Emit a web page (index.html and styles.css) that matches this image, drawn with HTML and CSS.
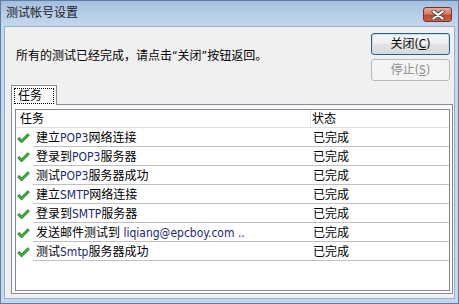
FILE: index.html
```html
<!DOCTYPE html>
<html>
<head>
<meta charset="utf-8">
<link rel="stylesheet" href="styles.css">
</head>
<body>
<div class="window">
  <div class="titlebar">
    <span class="title">测试帐号设置</span>
    <span class="close">
      <svg width="14" height="10" viewBox="0 0 14 10"><path d="M2.5 1.5 L11.5 8.5 M11.5 1.5 L2.5 8.5" stroke="#4a4a4a" stroke-width="4" stroke-linecap="round" fill="none"/><path d="M2.5 1.5 L11.5 8.5 M11.5 1.5 L2.5 8.5" stroke="#ffffff" stroke-width="2.2" stroke-linecap="round" fill="none"/></svg>
    </span>
  </div>
  <div class="client">
    <div class="top">
      <p class="msg">所有的测试已经完成，请点击“关闭”按钮返回。</p>
      <div class="buttons">
        <button class="btn default">关闭(<u>C</u>)</button>
        <button class="btn" disabled>停止(<u>S</u>)</button>
      </div>
    </div>
    <div class="tabs">
      <div class="tabstrip"><div class="tab"><span class="focus">任务</span></div></div>
      <div class="panel">
        <div class="list">
          <div class="header"><span class="h-task">任务</span><span class="h-status">状态</span></div>
          <div class="row"><span class="icon"><svg width="13" height="10" viewBox="0 0 13 10"><path d="M1.2 5 L4.6 8.4 L11.8 1.3" stroke="#17701c" stroke-width="2.8" fill="none"/><path d="M1.2 5 L4.6 8.4 L11.8 1.3" stroke="#3fbf3a" stroke-width="1.4" fill="none"/></svg></span><span class="cells"><span class="task">建立<span class="en">POP3</span>网络连接</span><span class="status">已完成</span></span></div>
          <div class="row"><span class="icon"><svg width="13" height="10" viewBox="0 0 13 10"><path d="M1.2 5 L4.6 8.4 L11.8 1.3" stroke="#17701c" stroke-width="2.8" fill="none"/><path d="M1.2 5 L4.6 8.4 L11.8 1.3" stroke="#3fbf3a" stroke-width="1.4" fill="none"/></svg></span><span class="cells"><span class="task">登录到<span class="en">POP3</span>服务器</span><span class="status">已完成</span></span></div>
          <div class="row"><span class="icon"><svg width="13" height="10" viewBox="0 0 13 10"><path d="M1.2 5 L4.6 8.4 L11.8 1.3" stroke="#17701c" stroke-width="2.8" fill="none"/><path d="M1.2 5 L4.6 8.4 L11.8 1.3" stroke="#3fbf3a" stroke-width="1.4" fill="none"/></svg></span><span class="cells"><span class="task">测试<span class="en">POP3</span>服务器成功</span><span class="status">已完成</span></span></div>
          <div class="row"><span class="icon"><svg width="13" height="10" viewBox="0 0 13 10"><path d="M1.2 5 L4.6 8.4 L11.8 1.3" stroke="#17701c" stroke-width="2.8" fill="none"/><path d="M1.2 5 L4.6 8.4 L11.8 1.3" stroke="#3fbf3a" stroke-width="1.4" fill="none"/></svg></span><span class="cells"><span class="task">建立<span class="en">SMTP</span>网络连接</span><span class="status">已完成</span></span></div>
          <div class="row"><span class="icon"><svg width="13" height="10" viewBox="0 0 13 10"><path d="M1.2 5 L4.6 8.4 L11.8 1.3" stroke="#17701c" stroke-width="2.8" fill="none"/><path d="M1.2 5 L4.6 8.4 L11.8 1.3" stroke="#3fbf3a" stroke-width="1.4" fill="none"/></svg></span><span class="cells"><span class="task">登录到<span class="en">SMTP</span>服务器</span><span class="status">已完成</span></span></div>
          <div class="row"><span class="icon"><svg width="13" height="10" viewBox="0 0 13 10"><path d="M1.2 5 L4.6 8.4 L11.8 1.3" stroke="#17701c" stroke-width="2.8" fill="none"/><path d="M1.2 5 L4.6 8.4 L11.8 1.3" stroke="#3fbf3a" stroke-width="1.4" fill="none"/></svg></span><span class="cells"><span class="task">发送邮件测试到 <span class="en">liqiang@epcboy.com ..</span></span><span class="status">已完成</span></span></div>
          <div class="row"><span class="icon"><svg width="13" height="10" viewBox="0 0 13 10"><path d="M1.2 5 L4.6 8.4 L11.8 1.3" stroke="#17701c" stroke-width="2.8" fill="none"/><path d="M1.2 5 L4.6 8.4 L11.8 1.3" stroke="#3fbf3a" stroke-width="1.4" fill="none"/></svg></span><span class="cells"><span class="task">测试<span class="en">Smtp</span>服务器成功</span><span class="status">已完成</span></span></div>
        </div>
      </div>
    </div>
  </div>
</div>
</body>
</html>
```

FILE: styles.css
```css
body {
  margin: 0;
  font-family: "DejaVu Sans Condensed", "Noto Sans CJK SC", sans-serif;
  font-size: 12px;
  color: #000;
}

.window {
  width: 459px;
  height: 304px;
  box-sizing: border-box;
  border: 1px solid #5c7ea4;
  background: #c3d7ed;
  display: flex;
  flex-direction: column;
}

.titlebar {
  height: 25px;
  flex: none;
  display: flex;
  align-items: flex-start;
  background: linear-gradient(#a3bedd, #b6cde7 12px, #c3d7ed);
}

.title {
  padding-left: 5px;
  line-height: 24px;
  color: #1b1b1b;
}

.close {
  margin-left: auto;
  margin-right: 6px;
  margin-top: 6px;
  width: 29px;
  height: 15px;
  box-sizing: border-box;
  border: 1px solid #7a3128;
  border-radius: 3px;
  background: linear-gradient(#e6ab9e, #d57a69 45%, #c04a35 55%, #c9614c);
  display: flex;
  justify-content: center;
  align-items: center;
}

.close svg { display: block; }

.client {
  flex: 1;
  min-height: 0;
  margin: 0 3px 4px 3px;
  background: #f0f0f0;
  border: 1px solid #9bb1cc;
  display: flex;
  flex-direction: column;
}

.top {
  display: flex;
  justify-content: space-between;
  padding: 6px 4px 0 11px;
}

.msg {
  margin: 15px 0 0;
  line-height: 16px;
}

.buttons {
  display: flex;
  flex-direction: column;
  gap: 4px;
}

.btn {
  width: 79px;
  height: 22px;
  box-sizing: border-box;
  border: 1px solid #707070;
  border-radius: 3px;
  background: linear-gradient(#f2f2f2, #ebebeb 50%, #dddddd 50%, #cfcfcf);
  font-family: inherit;
  font-size: 12px;
  line-height: 18px;
  padding: 0;
  color: #000;
}

.btn.default {
  border-color: #2f5f87;
  box-shadow: inset 0 0 0 1px #bfe3f6;
  background: linear-gradient(#f6f6f6, #eeeeee 50%, #e3e3e3 50%, #dadada);
}

.btn:disabled {
  border-color: #b5b9bc;
  background: #f4f4f4;
  color: #8d8d8d;
}

.btn u { text-decoration: underline; text-underline-offset: 1px; }

.tabs {
  flex: 1;
  display: flex;
  flex-direction: column;
  margin: 4px 1px 4px 6px;
}

.tabstrip { display: flex; }

.tab {
  width: 46px;
  height: 20px;
  box-sizing: border-box;
  border: 1px solid #898c95;
  border-bottom: none;
  background: #fcfcfc;
  padding: 2px 2px 0;
  margin-bottom: -1px;
  position: relative;
  z-index: 1;
}

.focus {
  display: block;
  height: 16px;
  box-sizing: border-box;
  border: 1px dotted #000;
  line-height: 14px;
  padding-left: 3px;
}

.panel {
  flex: 1;
  display: flex;
  border: 1px solid #898c95;
  background: #fcfcfc;
  padding: 4px 2px 2px 3px;
}

.list {
  flex: 1;
  border: 1px solid #828790;
  background: #fff;
}

.header {
  display: flex;
  height: 18px;
  box-sizing: border-box;
  border-bottom: 1px solid #e0e0e0;
  line-height: 17px;
}

.h-task {
  width: 295px;
  box-sizing: border-box;
  padding-left: 4px;
  padding-top: 1px;
  border-right: 1px solid #e5e5e5;
}

.h-status {
  padding-left: 1px;
  padding-top: 1px;
}

.row {
  display: flex;
  height: 19px;
}

.icon {
  width: 17px;
  flex: none;
  box-sizing: border-box;
  padding-left: 1px;
  padding-top: 1px;
  display: flex;
  align-items: center;
}

.icon svg { display: block; }

.cells {
  flex: 1;
  display: flex;
  box-sizing: border-box;
  border-bottom: 1px solid #c0c0c0;
  line-height: 17px;
  padding-top: 2px;
}

.task {
  width: 277px;
  box-sizing: border-box;
  padding-left: 3px;
  white-space: nowrap;
}

.status {
  padding-left: 3px;
}

.en { color: #1c2878; }
```
